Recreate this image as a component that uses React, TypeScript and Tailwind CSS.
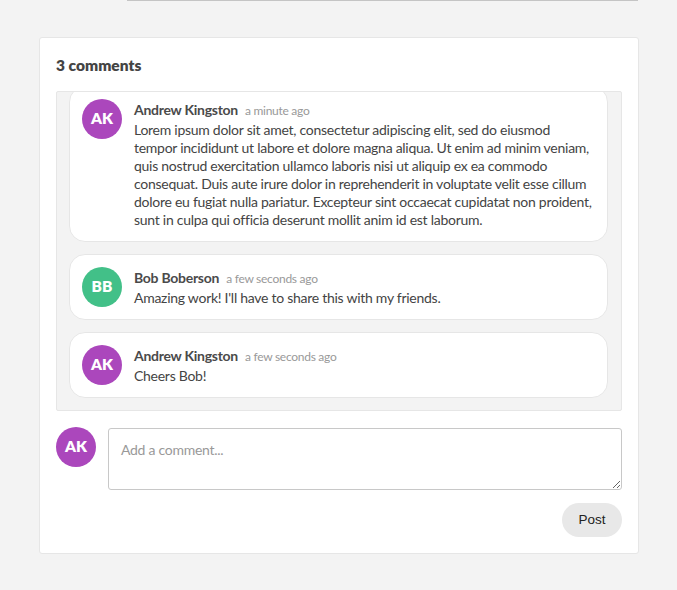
import React from "react";

type C = { initials: string; color: string; name: string; time: string; text: string };

const comments: C[] = [
  {
    initials: "AK",
    color: "bg-[#ab47bc]",
    name: "Andrew Kingston",
    time: "a minute ago",
    text: "Lorem ipsum dolor sit amet, consectetur adipiscing elit, sed do eiusmod tempor incididunt ut labore et dolore magna aliqua. Ut enim ad minim veniam, quis nostrud exercitation ullamco laboris nisi ut aliquip ex ea commodo consequat. Duis aute irure dolor in reprehenderit in voluptate velit esse cillum dolore eu fugiat nulla pariatur. Excepteur sint occaecat cupidatat non proident, sunt in culpa qui officia deserunt mollit anim id est laborum.",
  },
  {
    initials: "BB",
    color: "bg-[#42c088]",
    name: "Bob Boberson",
    time: "a few seconds ago",
    text: "Amazing work! I'll have to share this with my friends.",
  },
  {
    initials: "AK",
    color: "bg-[#ab47bc]",
    name: "Andrew Kingston",
    time: "a few seconds ago",
    text: "Cheers Bob!",
  },
];

function Avatar({ initials, color }: { initials: string; color: string }) {
  return (
    <div
      className={`${color} w-10 h-10 shrink-0 rounded-full flex items-center justify-center text-white font-extrabold text-[15.5px]`}
    >
      {initials}
    </div>
  );
}

export default function App() {
  return (
    <div
      className="min-h-[590px] w-[677px] bg-[#f3f3f3] text-[#444]"
      style={{ fontFamily: "Lato, 'Noto Sans', sans-serif" }}
    >
      <div className="ml-[127px] w-[511px] h-px bg-[#c4c4c4]" />
      <div className="ml-[39px] mt-9 w-[600px] bg-white border border-[#e6e6e6] rounded-[3px] p-4">
        <h2 className="text-[15.5px] leading-[22px] font-extrabold text-[#444] mb-[15px]">3 comments</h2>
        <div className="h-[320px] overflow-hidden bg-[#f3f3f3] border border-[#e6e6e6] rounded-[2px]">
          <div className="-mt-[18px] pt-3 pl-3 pr-[13px] pb-3 flex flex-col gap-3">
            {comments.map((c, i) => (
              <div
                key={i}
                className="bg-white border border-[#e6e6e6] rounded-[16px] p-3 flex gap-3"
              >
                <Avatar initials={c.initials} color={c.color} />
                <div className="flex-1 min-w-0 tracking-[-0.27px]">
                  <div className="leading-[19px]">
                    <span className="font-bold text-[14px] text-[#4a4a4a]">{c.name}</span>
                    <span className="ml-[7px] text-[12px] text-[#999]">{c.time}</span>
                  </div>
                  <p className="mt-[1px] text-[14px] leading-[18px] text-[#444]">{c.text}</p>
                </div>
              </div>
            ))}
          </div>
        </div>
        <div className="mt-[17px] flex gap-3 items-start">
          <div className="-mt-px">
            <Avatar initials="AK" color="bg-[#ab47bc]" />
          </div>
          <textarea
            placeholder="Add a comment..."
            className="flex-1 h-[62px] border border-[#c8c8c8] rounded-[3px] px-3 py-3 text-[14px] leading-[18px] tracking-[-0.27px] placeholder:text-[#999] outline-none"
            style={{ fontFamily: "Lato, 'Noto Sans', sans-serif" }}
          />
        </div>
        <div className="mt-[13px] flex justify-end">
          <button
            className="w-[60px] h-[34px] rounded-full bg-[#e8e8e8] text-[13.5px] text-[#222]"
            style={{ fontFamily: "'Liberation Sans', Arial, sans-serif" }}
          >
            Post
          </button>
        </div>
      </div>
    </div>
  );
}
